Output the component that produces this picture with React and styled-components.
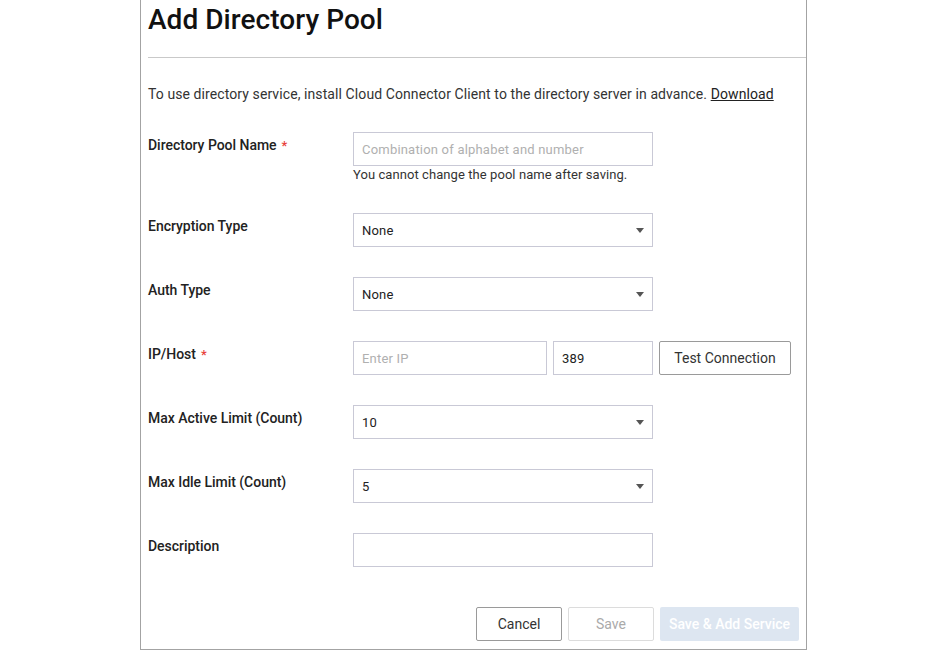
import React from 'react';
import styled, { createGlobalStyle } from 'styled-components';

const GlobalStyle = createGlobalStyle`
  html, body {
    margin: 0;
    padding: 0;
    background: #fff;
    overflow: hidden;
  }
  body {
    font-family: Roboto, "Liberation Sans", sans-serif;
    color: #333;
  }
  * {
    box-sizing: border-box;
  }
`;

const Panel = styled.div`
  width: 667px;
  margin: 0 139px 0 140px;
  border: 1px solid #a3a3a3;
  border-top: none;
  padding: 2px 0 8px 7px;
  background: #fff;
`;

const Title = styled.h1`
  margin: 0;
  font-size: 28px;
  line-height: 36px;
  font-weight: 500;
  color: #111;
  letter-spacing: 0.05px;
`;

const Divider = styled.hr`
  margin: 19px 0 0;
  border: none;
  border-top: 1px solid #c9c9c9;
`;

const Notice = styled.p`
  margin: 26px 0 28px;
  font-size: 14px;
  line-height: 20px;
  color: #333;
  letter-spacing: 0.09px;

  a {
    color: #222;
    text-decoration: underline;
  }
`;

const Row = styled.div`
  display: flex;
  align-items: flex-start;
  margin-bottom: ${(p) => p.gap ?? 30}px;
`;

const Label = styled.div`
  width: 205px;
  flex-shrink: 0;
  padding-top: 3px;
  font-size: 14px;
  line-height: 20px;
  font-weight: 500;
  color: #222;
  letter-spacing: -0.03px;
`;

const Required = styled.span`
  color: #e8413c;
  margin-left: 5px;
  font-size: 13px;
`;

const Control = styled.div`
  display: flex;
  flex-direction: column;
`;

const Inline = styled.div`
  display: flex;
  gap: 6px;
`;

const Input = styled.input`
  width: ${(p) => p.w || 300}px;
  height: 34px;
  border: 1px solid #c9c9d6;
  border-radius: 0;
  padding: 0 8px;
  font-family: Roboto, "Liberation Sans", sans-serif;
  font-size: 13px;
  letter-spacing: 0.2px;
  color: #222;
  background: #fff;
  outline: none;

  &::placeholder {
    color: #b0b0b0;
  }
`;

const Help = styled.div`
  font-size: 13px;
  line-height: 17px;
  color: #333;
  letter-spacing: 0.07px;
`;

const SelectBox = styled.div`
  width: 300px;
  height: 34px;
  border: 1px solid #c9c9d6;
  padding: 0 8px;
  display: flex;
  align-items: center;
  justify-content: space-between;
  font-size: 13px;
  letter-spacing: 0.2px;
  color: #222;
`;

const Caret = styled.span`
  width: 0;
  height: 0;
  border-left: 4px solid transparent;
  border-right: 4px solid transparent;
  border-top: 5px solid #555;
`;

const Button = styled.button`
  height: 34px;
  width: ${(p) => p.w}px;
  border-radius: 2px;
  font-family: Roboto, "Liberation Sans", sans-serif;
  font-size: 14px;
  padding: 0;
  cursor: pointer;
  border: 1px solid ${(p) => (p.variant === 'disabled' ? '#dcdcdc' : '#9a9a9a')};
  background: #fff;
  color: ${(p) => (p.variant === 'disabled' ? '#aaa' : '#333')};

  ${(p) =>
    p.variant === 'primary' &&
    `
    border: none;
    background: #dde6f1;
    color: #fff;
    font-weight: 500;
  `}
`;

const Footer = styled.div`
  display: flex;
  justify-content: flex-end;
  gap: 6px;
  padding-right: 7px;
  margin-top: 40px;
`;

function Select({ value }) {
  return (
    <SelectBox>
      <span>{value}</span>
      <Caret />
    </SelectBox>
  );
}

export default function App() {
  return (
    <>
      <GlobalStyle />
      <Panel>
        <Title>Add Directory Pool</Title>
        <Divider />
        <Notice>
          To use directory service, install Cloud Connector Client to the directory server in advance.{' '}
          <a href="#download">Download</a>
        </Notice>

        <Row>
          <Label>
            Directory Pool Name<Required>*</Required>
          </Label>
          <Control>
            <Input placeholder="Combination of alphabet and number" />
            <Help>You cannot change the pool name after saving.</Help>
          </Control>
        </Row>

        <Row>
          <Label>Encryption Type</Label>
          <Select value="None" />
        </Row>

        <Row>
          <Label>Auth Type</Label>
          <Select value="None" />
        </Row>

        <Row>
          <Label>
            IP/Host<Required>*</Required>
          </Label>
          <Inline>
            <Input w={194} placeholder="Enter IP" />
            <Input w={100} defaultValue="389" />
            <Button w={132}>Test Connection</Button>
          </Inline>
        </Row>

        <Row>
          <Label>Max Active Limit (Count)</Label>
          <Select value="10" />
        </Row>

        <Row>
          <Label>Max Idle Limit (Count)</Label>
          <Select value="5" />
        </Row>

        <Row gap={0}>
          <Label>Description</Label>
          <Input />
        </Row>

        <Footer>
          <Button w={86}>Cancel</Button>
          <Button w={86} variant="disabled">
            Save
          </Button>
          <Button w={139} variant="primary">
            Save &amp; Add Service
          </Button>
        </Footer>
      </Panel>
    </>
  );
}
